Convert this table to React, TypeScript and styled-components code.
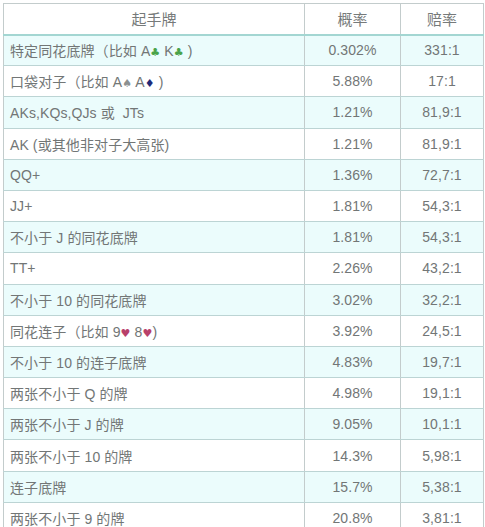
import React from "react";
import styled, { createGlobalStyle } from "styled-components";

const GlobalStyle = createGlobalStyle`
  body {
    margin: 0;
    background: #ffffff;
    font-family: "Liberation Sans", Arial, "Noto Sans CJK SC", sans-serif;
  }
`;

const Wrap = styled.div`
  padding: 3px 0 0 3px;
`;

const Table = styled.table`
  border-collapse: collapse;
  table-layout: fixed;
  width: 480px;
  font-size: 14px;
  color: #727676;
`;

const HeadCell = styled.th<{ $w: number }>`
  width: ${(p) => p.$w}px;
  height: 31px;
  box-sizing: border-box;
  padding: 0;
  font-weight: normal;
  font-size: 15px;
  color: #767a7a;
  text-align: center;
  border: 1px solid #c3cccc;
  border-bottom: 2px solid #a3d6d2;
  background: #ffffff;
`;

const Row = styled.tr<{ $alt: boolean }>`
  background: ${(p) => (p.$alt ? "#ebfcfc" : "#ffffff")};
`;

const Cell = styled.td<{ $center?: boolean }>`
  height: 31.2px;
  box-sizing: border-box;
  padding: 0 0 0 ${(p) => (p.$center ? 0 : 6)}px;
  text-align: ${(p) => (p.$center ? "center" : "left")};
  border-left: 1px solid #c3cccc;
  border-right: 1px solid #c3cccc;
  border-bottom: 1px solid #bcd4d4;
  white-space: pre;
  letter-spacing: 0.1px;
`;

const Suit = styled.span<{ $c: string }>`
  color: ${(p) => p.$c};
  font-size: 11px;
  font-family: "DejaVu Sans", sans-serif;
`;

const club = <Suit $c="#4aa34a">♣</Suit>;
const spade = <Suit $c="#8c9090">♠</Suit>;
const diamond = <Suit $c="#1e2a78">♦</Suit>;
const heart = <Suit $c="#b8406a">♥</Suit>;

const rows: [React.ReactNode, string, string][] = [
  [<>特定同花底牌（比如 A{club} K{club} )</>, "0.302%", "331:1"],
  [<>口袋对子（比如 A{spade} A{diamond} )</>, "5.88%", "17:1"],
  ["AKs,KQs,QJs 或  JTs", "1.21%", "81,9:1"],
  ["AK (或其他非对子大高张)", "1.21%", "81,9:1"],
  ["QQ+", "1.36%", "72,7:1"],
  ["JJ+", "1.81%", "54,3:1"],
  ["不小于 J 的同花底牌", "1.81%", "54,3:1"],
  ["TT+", "2.26%", "43,2:1"],
  ["不小于 10 的同花底牌", "3.02%", "32,2:1"],
  [<>同花连子（比如 9{heart} 8{heart})</>, "3.92%", "24,5:1"],
  ["不小于 10 的连子底牌", "4.83%", "19,7:1"],
  ["两张不小于 Q 的牌", "4.98%", "19,1:1"],
  ["两张不小于 J 的牌", "9.05%", "10,1:1"],
  ["两张不小于 10 的牌", "14.3%", "5,98:1"],
  ["连子底牌", "15.7%", "5,38:1"],
  ["两张不小于 9 的牌", "20.8%", "3,81:1"],
];

export default function App() {
  return (
    <Wrap>
      <GlobalStyle />
      <Table>
        <thead>
          <tr>
            <HeadCell $w={301}>起手牌</HeadCell>
            <HeadCell $w={96}>概率</HeadCell>
            <HeadCell $w={83}>赔率</HeadCell>
          </tr>
        </thead>
        <tbody>
          {rows.map(([hand, prob, odds], i) => (
            <Row key={i} $alt={i % 2 === 0}>
              <Cell>{hand}</Cell>
              <Cell $center>{prob}</Cell>
              <Cell $center>{odds}</Cell>
            </Row>
          ))}
        </tbody>
      </Table>
    </Wrap>
  );
}
